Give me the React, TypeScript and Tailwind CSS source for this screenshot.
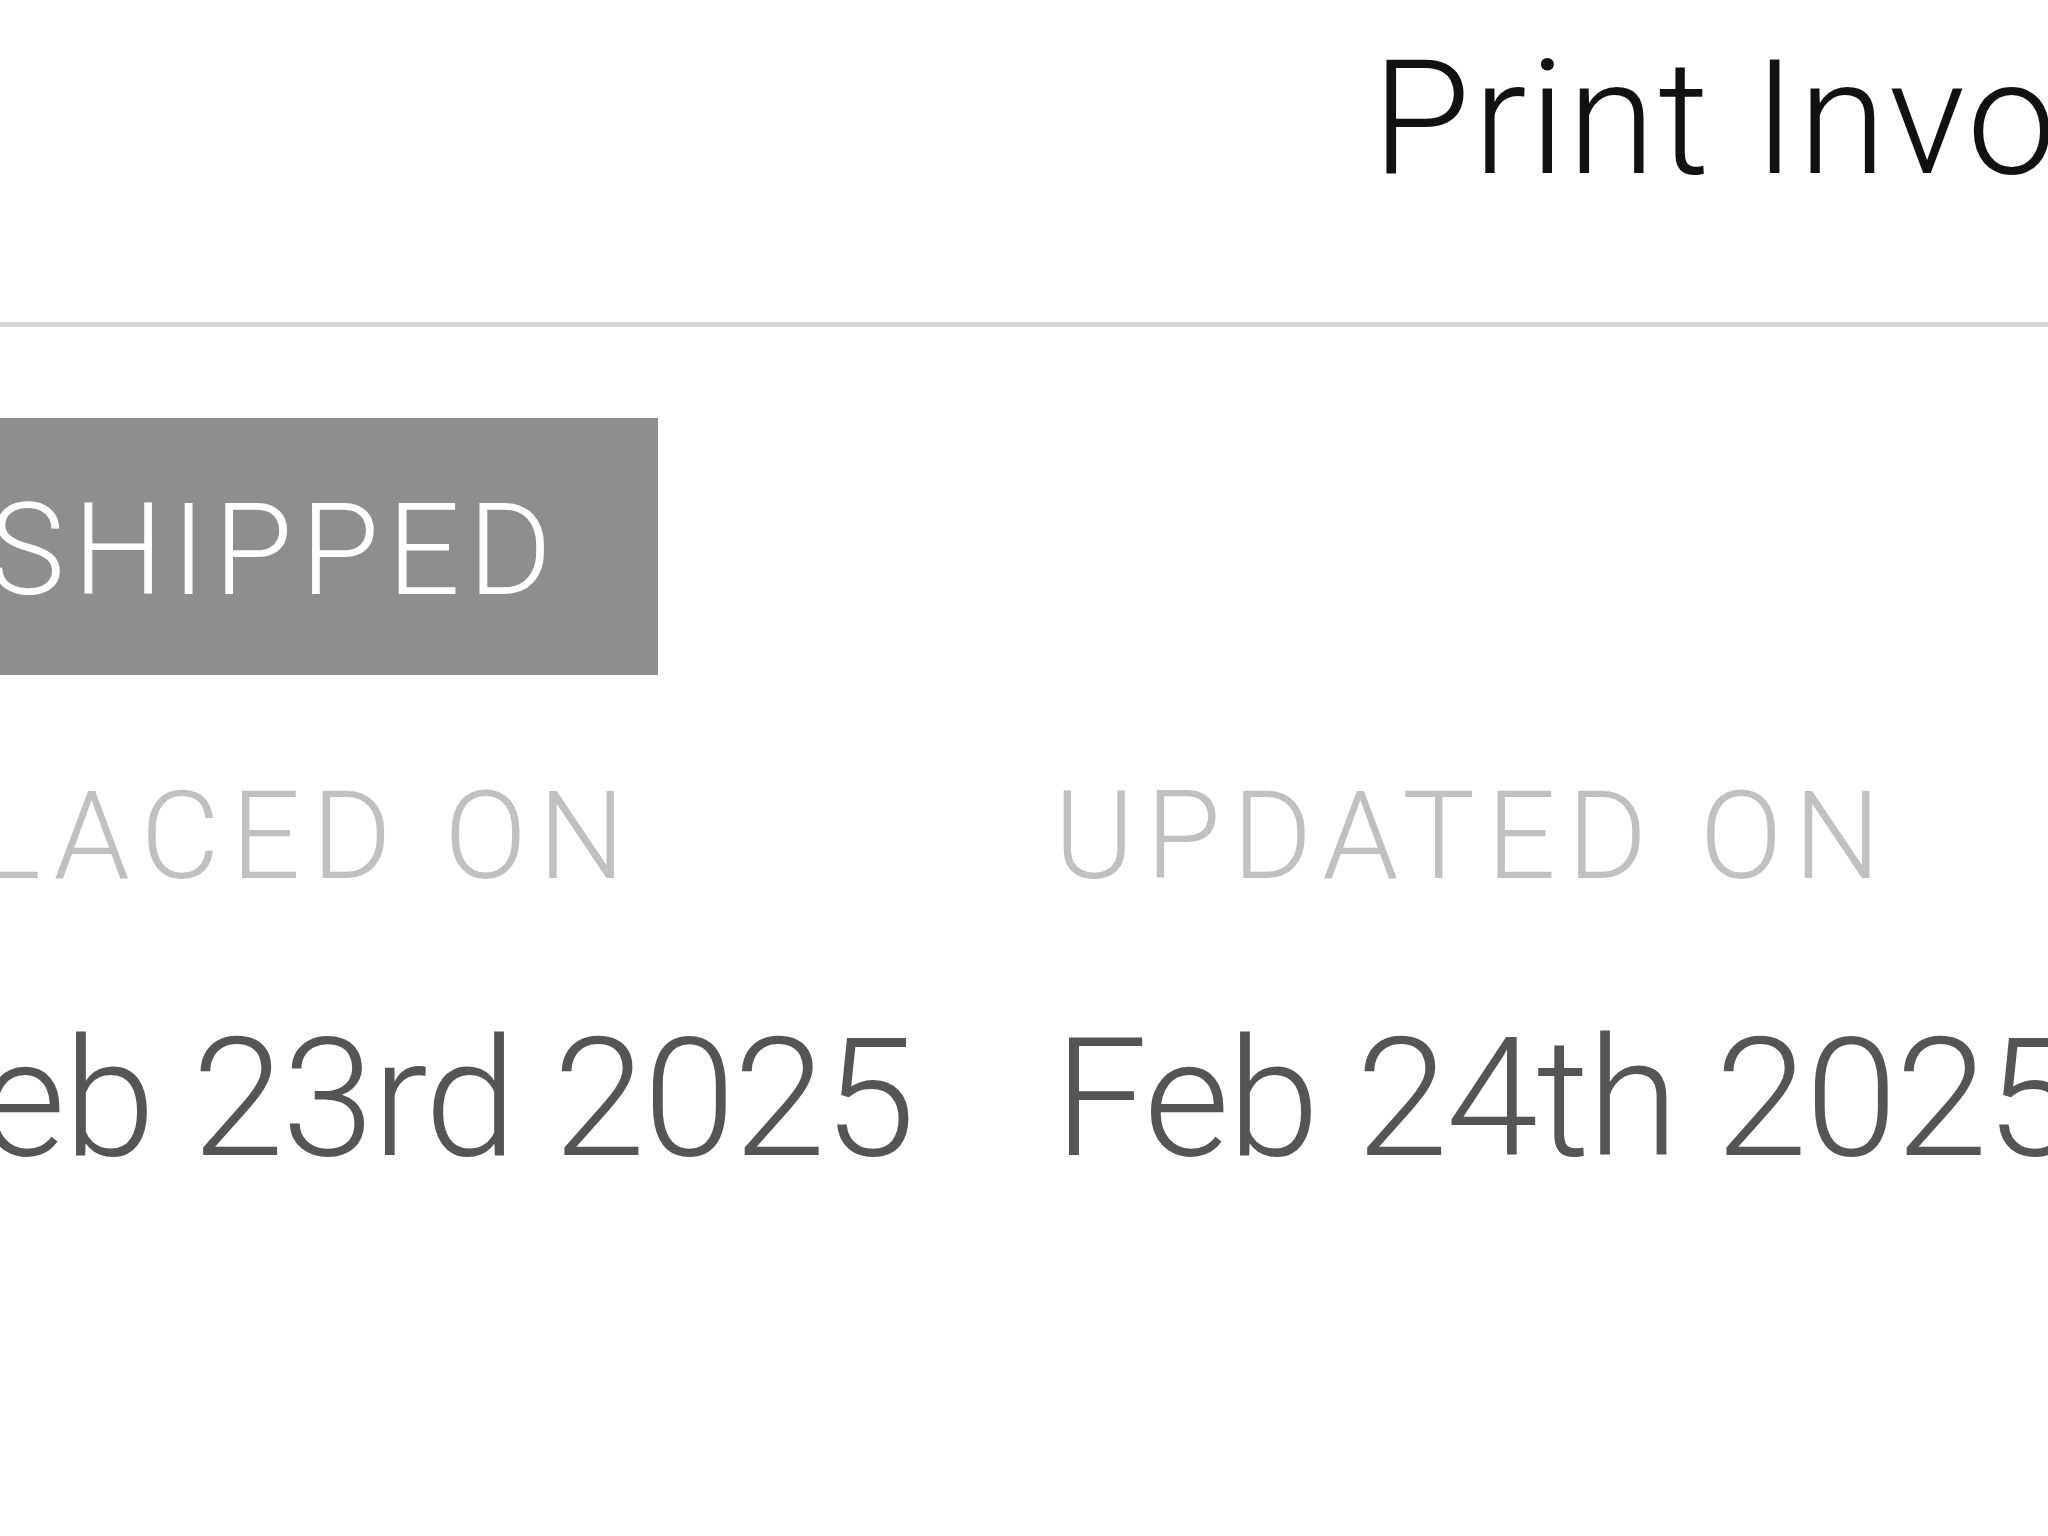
import React from "react";

export default function App() {
  return (
    <div className="w-[2048px] h-[1536px] overflow-hidden bg-white font-['Roboto',sans-serif]">
      <div className="h-[322px] pt-[39px] pl-[1372px] flex">
        <span className="text-[160px] font-light leading-none tracking-[2.4px] whitespace-nowrap text-[#111111]">Print Invoice</span>
      </div>
      <div className="h-[5px] bg-[#d6d6d6]" />
      <div className="ml-[-110px] flex flex-col">
        <div className="mt-[91px] flex">
          <span className="bg-[#8e8e8e] text-white text-[128px] font-light leading-none tracking-[8px] uppercase whitespace-nowrap pl-[99px] pr-[98px] pt-[68px] pb-[61px]">
            Shipped
          </span>
        </div>
        <div className="mt-[101px] flex">
          <div className="w-[1164px] flex flex-col shrink-0">
            <span className="text-[122px] font-light leading-none tracking-[11.4px] uppercase text-[#c0c0c0] whitespace-nowrap">Placed on</span>
            <span className="mt-[118px] text-[166px] font-light leading-none tracking-[-2px] text-[#555555] whitespace-nowrap">Feb 23rd 2025</span>
          </div>
          <div className="flex flex-col shrink-0">
            <span className="text-[122px] font-light leading-none tracking-[11.4px] uppercase text-[#c0c0c0] whitespace-nowrap">Updated on</span>
            <span className="mt-[118px] text-[166px] font-light leading-none tracking-[-2px] text-[#555555] whitespace-nowrap">Feb 24th 2025</span>
          </div>
        </div>
      </div>
    </div>
  );
}
